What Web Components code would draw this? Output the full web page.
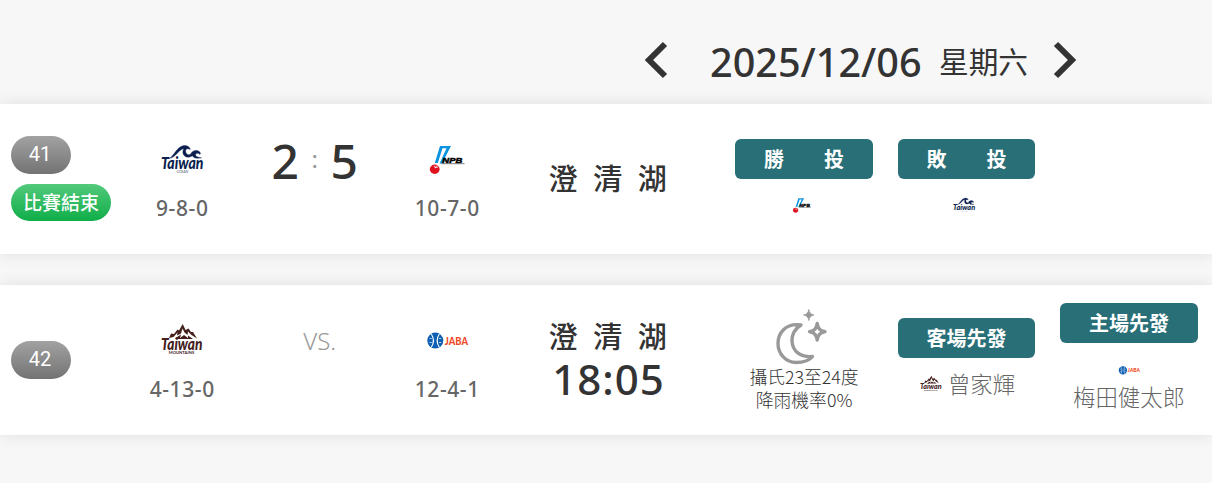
<!DOCTYPE html>
<html lang="zh-Hant">
<head>
<meta charset="utf-8">
<title>賽程</title>
<style>
  body {
    margin: 0;
    height: 483px;
    overflow: hidden;
    background: #f7f7f7;
    color: #333;
    font-family: "Noto Sans", "Noto Sans CJK TC", sans-serif;
  }
</style>
</head>
<body>
<game-schedule>
  <date-header date="2025/12/06" day="星期六"></date-header>
  <game-row>
    <game-badge slot="badge">41</game-badge>
    <game-badge slot="badge" type="final">比賽結束</game-badge>
    <team-cell slot="away" team="ocean" record="9-8-0"></team-cell>
    <score-cell slot="score" away="2" home="5"></score-cell>
    <team-cell slot="home" team="npb" record="10-7-0"></team-cell>
    <place-cell slot="place" name="澄清湖"></place-cell>
    <pitcher-cell slot="info" label="勝　　投" team="npb"></pitcher-cell>
    <pitcher-cell slot="info" label="敗　　投" team="ocean"></pitcher-cell>
  </game-row>
  <game-row>
    <game-badge slot="badge">42</game-badge>
    <team-cell slot="away" team="mountain" record="4-13-0"></team-cell>
    <score-cell slot="score"></score-cell>
    <team-cell slot="home" team="jaba" record="12-4-1"></team-cell>
    <place-cell slot="place" name="澄清湖" time="18:05"></place-cell>
    <weather-cell slot="info" temp="攝氏23至24度" rain="降雨機率0%"></weather-cell>
    <pitcher-cell slot="info" label="客場先發" team="mountain" name="曾家輝"></pitcher-cell>
    <pitcher-cell slot="info" label="主場先發" team="jaba" name="梅田健太郎" stacked></pitcher-cell>
  </game-row>
</game-schedule>

<script>
// Team logo artwork, all on a 50x50 box
const LOGOS = {
  ocean: `
    <g fill="#0b1f4f">
      <path d="M12 24.500C17 22.500 19 13.500 26 11.800C30 11 33 13 33.300 15.500C30.500 13.800 28.500 15 28.600 17C28.800 20 31 21.500 33.500 20.200C35 17 38 15.700 41 16.800C43.500 17.800 43.800 20 43 20.500C41.500 18.800 39 19 38.600 20.800C38.500 22 40 23.300 44.500 23.800C39 25 36.200 23.800 35.600 21.800C32 24.200 27 23.500 26 19.500C25.700 17.500 26 15.800 27 14.500C21 16 19 23.500 12 24.500Z" stroke="#0b1f4f" stroke-width=".4"/>
      <text x="4" y="35.200" textLength="42.500" lengthAdjust="spacingAndGlyphs" font-family="Lato, sans-serif" font-size="16" font-weight="900" font-style="italic">Taiwan</text>
      <text x="19.500" y="39" textLength="11.500" lengthAdjust="spacingAndGlyphs" font-family="Lato, sans-serif" font-size="3" opacity=".8">OCEAN</text>
    </g>`,
  mountain: `
    <g fill="#45201d">
      <path d="M12 23L14 18.500L17 19L20.500 14.500L22 15.500L25.700 9L28.500 15L31.500 13.500L34 17L36 17L40 23.500L34.500 20L31 16.500L30.500 20L27.500 17.500L25.500 13.500L24 18.500L20 20.500L20.500 17.500L16.500 22Z"/>
      <path d="M18.500 23L24 19.500L23 23L27 20L31 23L31 20.500L36 24H18.500Z"/>
      <text x="4" y="35.400" textLength="41.500" lengthAdjust="spacingAndGlyphs" font-family="Lato, sans-serif" font-size="16" font-weight="900" font-style="italic">Taiwan</text>
      <text x="11.700" y="39.200" textLength="25.500" lengthAdjust="spacingAndGlyphs" font-family="Lato, sans-serif" font-size="3" font-weight="700">MOUNTAINS</text>
    </g>`,
  npb: `
    <path d="M18 12H29L20 29.500H17.600L24.500 14.300H20.500L15.800 29H12.800Z" fill="#0a93e0"/>
    <ellipse cx="12.700" cy="35.200" rx="4.900" ry="4.700" fill="#e0121f"/>
    <path d="M12 31.700L13.300 33.800L16 33M13.300 33.800L14.800 31.500" fill="none" stroke="#fff" stroke-width=".8"/>
    <text x="20.300" y="28.700" textLength="20" lengthAdjust="spacingAndGlyphs" font-family="Liberation Sans, sans-serif" font-size="7.600" font-weight="700" font-style="italic" fill="#000" stroke="#000" stroke-width=".5">NPB</text>
    <path d="M19.500 29.700H42.500" stroke="#555" stroke-width=".8"/>`,
  jaba: `
    <circle cx="13.300" cy="25.600" r="8" fill="#0d5fb4"/>
    <path d="M9.300 19C12 23 12 28 9.300 32.300M17.300 19C14.600 23 14.600 28 17.300 32.300" fill="none" stroke="#fff" stroke-width="1.100"/>
    <path d="M7.500 23.500H9.700M7.500 27.500H9.700M17 23.500H19.200M17 27.500H19.200" stroke="#fff" stroke-width=".7"/>
    <text x="22.800" y="29.700" textLength="23.200" lengthAdjust="spacingAndGlyphs" font-family="Lato, sans-serif" font-size="11" font-weight="900" fill="#ee4a26">JABA</text>`
};

// Base class: renders the shadow root once from render()
class BaseElement extends HTMLElement {
  constructor() {
    super();
    this.attachShadow({ mode: 'open' });
  }

  connectedCallback() {
    this.shadowRoot.innerHTML = this.render();
  }
}

class GameSchedule extends BaseElement {
  render() {
    return `
      <style>
        :host {
          display: flex;
          flex-direction: column;
          gap: 31px;
        }
        ::slotted(date-header) { margin-bottom: -31px; }
      </style>
      <slot></slot>
    `;
  }
}
customElements.define('game-schedule', GameSchedule);

class DateHeader extends BaseElement {
  render() {
    return `
      <style>
        :host {
          display: flex;
          align-items: center;
          box-sizing: border-box;
          height: 104px;
          padding: 16px 0 0 644px;
        }
        svg { display: block; flex: none; }
        .date {
          width: 212px;
          margin: 0 17px 0 42px;
          padding-top: 3px;
          font-size: 39.600px;
          line-height: 50px;
          font-weight: 500;
          white-space: nowrap;
        }
        .day {
          width: 90px;
          margin-right: 24px;
          padding-top: 3px;
          font-size: 29.700px;
          line-height: 50px;
          font-weight: 400;
          white-space: nowrap;
        }
      </style>
      <svg width="24" height="38" viewBox="0 0 24 38"><path d="M21 3L5 19L21 35" fill="none" stroke="#333" stroke-width="6"/></svg>
      <span class="date">${this.getAttribute('date')}</span>
      <span class="day">${this.getAttribute('day')}</span>
      <svg width="24" height="38" viewBox="0 0 24 38"><path d="M3 3L19 19L3 35" fill="none" stroke="#333" stroke-width="6"/></svg>
    `;
  }
}
customElements.define('date-header', DateHeader);

class GameRow extends BaseElement {
  render() {
    return `
      <style>
        :host {
          display: grid;
          grid-template-columns: 116px repeat(3, 132.500px) 190px 507px;
          align-items: center;
          height: 150px;
          background: #fff;
          box-shadow: 0 0 15px rgba(0, 0, 0, .1);
        }
        .badges {
          display: flex;
          flex-direction: column;
          align-items: flex-start;
          gap: 10px;
          padding: 0 0 1px 11px;
        }
        .info {
          display: grid;
          grid-template-columns: repeat(3, 162.500px);
          align-items: center;
          padding-left: 19.300px;
        }
      </style>
      <div class="badges"><slot name="badge"></slot></div>
      <slot name="away"></slot>
      <slot name="score"></slot>
      <slot name="home"></slot>
      <slot name="place"></slot>
      <div class="info"><slot name="info"></slot></div>
    `;
  }
}
customElements.define('game-row', GameRow);

class GameBadge extends BaseElement {
  render() {
    return `
      <style>
        :host {
          display: block;
          box-sizing: border-box;
          width: 60px;
          height: 38px;
          border-radius: 19px;
          background: linear-gradient(#a2a2a2, #737373);
          color: #fff;
          font-family: Roboto, "Noto Sans CJK TC", sans-serif;
          font-size: 20px;
          line-height: 37px;
          padding-right: 2px;
          text-align: center;
          white-space: nowrap;
        }
        :host([type="final"]) {
          width: 100px;
          height: 37px;
          padding: 0;
          background: linear-gradient(#53c97b, #0fae49);
          font-size: 19px;
          line-height: 39px;
          font-weight: 500;
        }
      </style>
      <slot></slot>
    `;
  }
}
customElements.define('game-badge', GameBadge);

class TeamLogo extends BaseElement {
  render() {
    return `
      <style>
        :host {
          display: block;
          width: var(--logo-size, 50px);
          height: var(--logo-size, 50px);
        }
        svg { display: block; width: 100%; height: 100%; overflow: visible; }
      </style>
      <svg viewBox="0 0 50 50">${LOGOS[this.getAttribute('team')]}</svg>
    `;
  }
}
customElements.define('team-logo', TeamLogo);

class TeamCell extends BaseElement {
  render() {
    return `
      <style>
        :host {
          display: flex;
          flex-direction: column;
          align-items: center;
          gap: 9px;
          padding-bottom: 2px;
        }
        .record {
          color: #666;
          font-size: 21px;
          line-height: 30px;
          font-weight: 500;
          letter-spacing: .6px;
        }
      </style>
      <team-logo team="${this.getAttribute('team')}"></team-logo>
      <span class="record">${this.getAttribute('record')}</span>
    `;
  }
}
customElements.define('team-cell', TeamCell);

class ScoreCell extends BaseElement {
  render() {
    const away = this.getAttribute('away');
    return `
      <style>
        :host {
          display: flex;
          justify-content: center;
          align-items: flex-start;
          height: 89px;
        }
        .num {
          width: 32px;
          text-align: center;
          font-size: 48px;
          line-height: 52px;
          font-weight: 500;
        }
        .colon {
          width: 27px;
          text-align: center;
          color: #999;
          font-size: 24px;
          line-height: 48px;
        }
        .vs {
          margin-left: 10px;
          color: #999;
          font-size: 24px;
          line-height: 50px;
          font-weight: 300;
        }
      </style>
      ${away === null
        ? `<span class="vs">VS.</span>`
        : `<span class="num">${away}</span><span class="colon">:</span><span class="num">${this.getAttribute('home')}</span>`}
    `;
  }
}
customElements.define('score-cell', ScoreCell);

class PlaceCell extends BaseElement {
  render() {
    const time = this.getAttribute('time');
    return `
      <style>
        :host {
          display: flex;
          flex-direction: column;
          align-items: center;
          white-space: nowrap;
        }
        .name {
          margin-right: -14px;
          font-size: 29px;
          line-height: 42px;
          font-weight: 500;
          letter-spacing: 15.700px;
        }
        .time {
          padding-bottom: 5px;
          font-size: 42px;
          line-height: 42px;
          font-weight: 500;
          letter-spacing: 1px;
        }
      </style>
      <span class="name">${this.getAttribute('name')}</span>
      ${time ? `<span class="time">${time}</span>` : ''}
    `;
  }
}
customElements.define('place-cell', PlaceCell);

class PitcherCell extends BaseElement {
  render() {
    const name = this.getAttribute('name');
    return `
      <style>
        :host {
          display: flex;
          flex-direction: column;
          align-items: center;
          --logo-size: 26px;
        }
        .label {
          width: 137.500px;
          height: 40px;
          border-radius: 6px;
          background: #296f78;
          color: #fff;
          font-family: "Noto Sans CJK TC", sans-serif;
          font-size: 20px;
          line-height: 40px;
          font-weight: 700;
          text-align: center;
          white-space: pre;
        }
        .player {
          display: flex;
          align-items: center;
          gap: 4px;
          height: 28px;
          padding: 12px 5px 0 0;
          color: #666;
          font-family: "Noto Sans CJK TC", sans-serif;
          font-size: 22.400px;
          line-height: 30px;
          font-weight: 300;
          white-space: nowrap;
        }
        :host([name]) .player {
          height: 36px;
          padding: 8px 0 0;
        }
        :host([name]) span { margin-top: -2px; }
        :host([stacked]) .player {
          flex-direction: column;
          gap: 0;
          height: auto;
          padding: 14px 0 7px;
        }
      </style>
      <div class="label">${this.getAttribute('label')}</div>
      <div class="player">
        <team-logo team="${this.getAttribute('team')}"></team-logo>
        ${name ? `<span>${name}</span>` : ''}
      </div>
    `;
  }
}
customElements.define('pitcher-cell', PitcherCell);

class WeatherCell extends BaseElement {
  render() {
    return `
      <style>
        :host {
          display: flex;
          flex-direction: column;
          align-items: center;
          padding-bottom: 1px;
          font-family: "Noto Sans CJK TC", sans-serif;
          font-size: 17.800px;
          line-height: 23px;
          font-weight: 300;
          white-space: nowrap;
        }
        svg { display: block; margin-bottom: -1px; }
      </style>
      <svg width="60" height="58" viewBox="0 0 60 58" fill="none" stroke="#999" stroke-linejoin="round">
        <path d="M27 17C11 14.500 4 26 4 35.500C4 46 12 54.500 22 54.500C29 54.500 35 53 38.500 48.500C26 49.500 18.500 43 18 33C17.800 26 20.500 21 27 17Z" stroke-width="3.400"/>
        <path d="M43.200 15.500C44.200 20.500 45.500 22.500 51 23.700C45.500 25 44.200 27 43.200 32C42.200 27 41 25 35.500 23.700C41 22.500 42.200 20.500 43.200 15.500Z" stroke-width="3.400"/>
        <path d="M34.800 1.500Q35.500 6.300 40 7Q35.500 7.700 34.800 12.500Q34.100 7.700 29.500 7Q34.100 6.300 34.800 1.500Z" fill="#999" stroke="#999" stroke-width=".8"/>
      </svg>
      <span>${this.getAttribute('temp')}</span>
      <span>${this.getAttribute('rain')}</span>
    `;
  }
}
customElements.define('weather-cell', WeatherCell);
</script>
</body>
</html>
